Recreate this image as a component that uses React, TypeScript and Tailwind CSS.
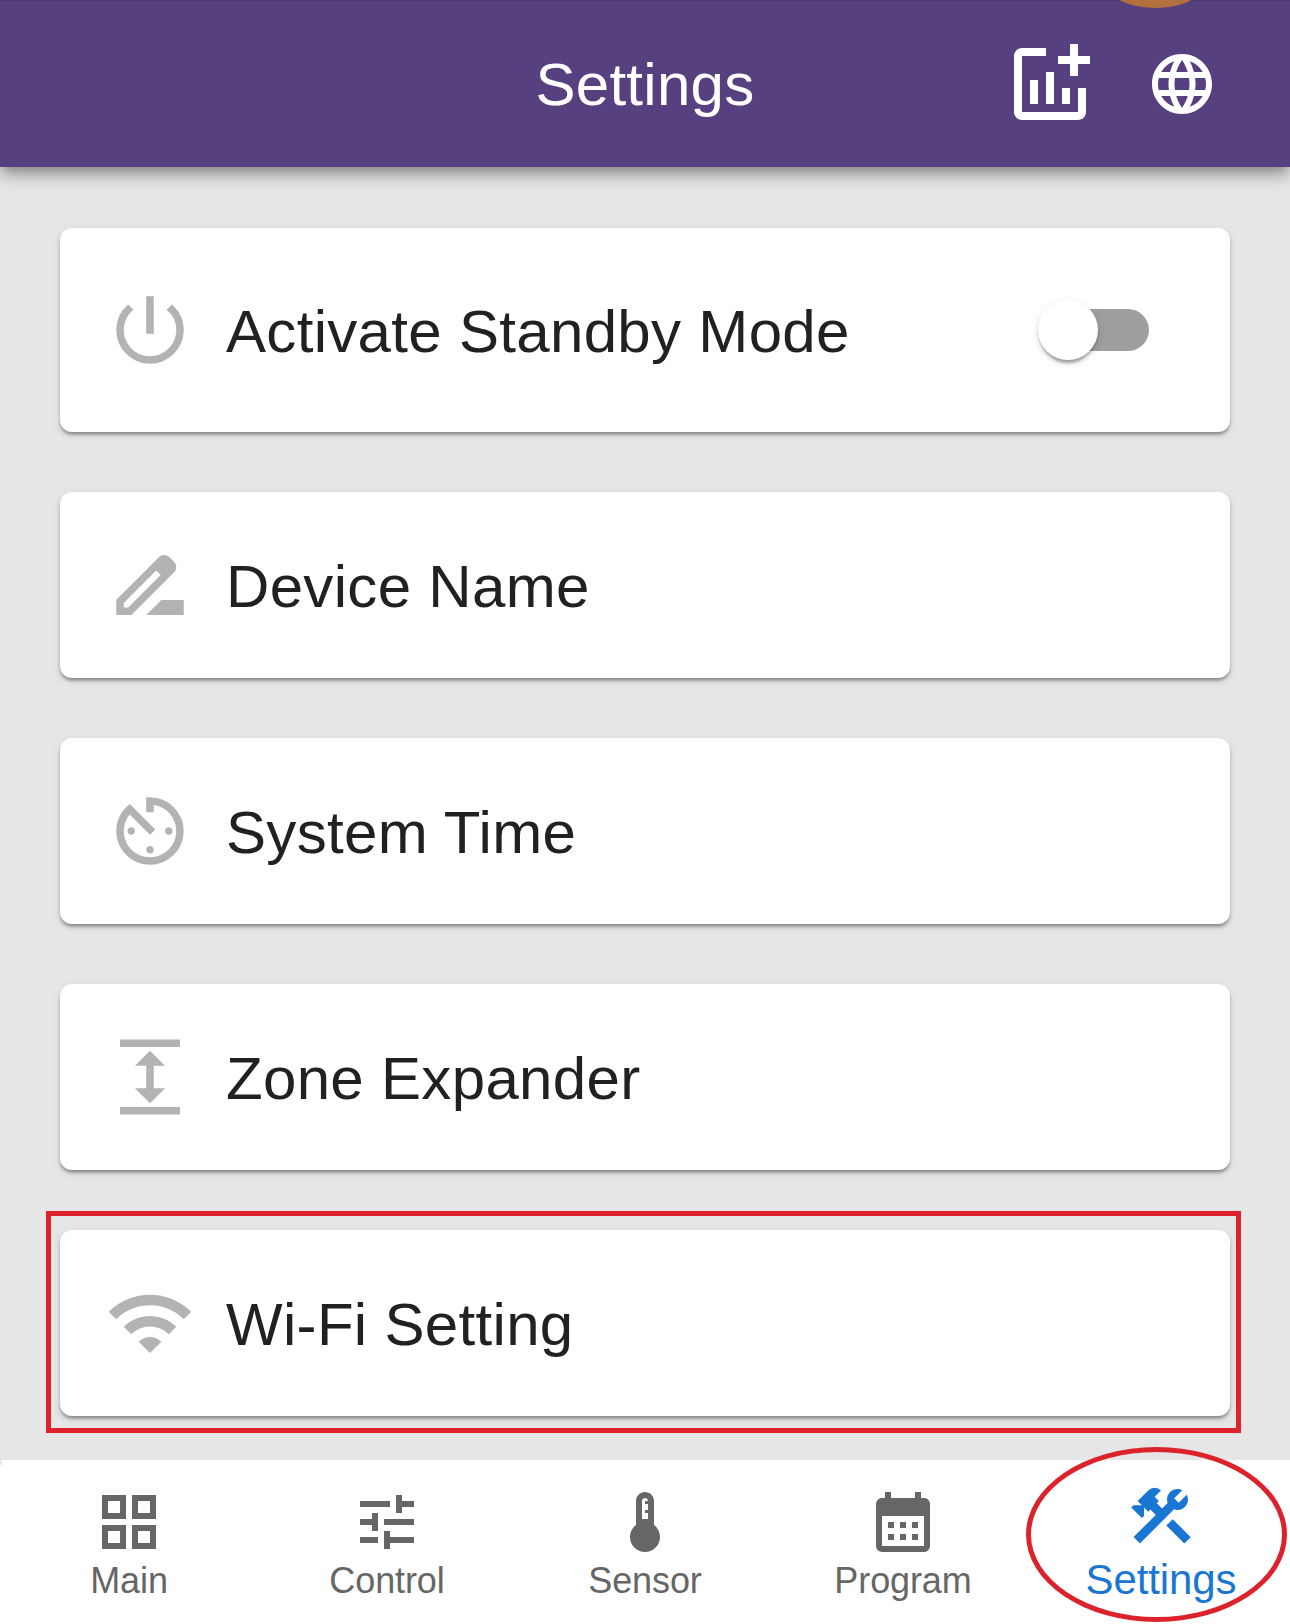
import type { ReactNode } from "react";
import type { IconType } from "react-icons";
import {
  MdAddchart,
  MdAvTimer,
  MdCalendarMonth,
  MdConstruction,
  MdDeviceThermostat,
  MdDriveFileRenameOutline,
  MdExpand,
  MdGridView,
  MdLanguage,
  MdPowerSettingsNew,
  MdTune,
  MdWifi,
} from "react-icons/md";

function Card({
  icon: Icon,
  label,
  tall = false,
  children,
}: {
  icon: IconType;
  label: string;
  tall?: boolean;
  children?: ReactNode;
}) {
  return (
    <div
      className={`relative flex shrink-0 items-center rounded-[12px] bg-white pl-[45px] pr-[81px] shadow-[0_6px_3px_-6px_rgba(0,0,0,0.2),0_3px_3px_0_rgba(0,0,0,0.28),0_3px_9px_0_rgba(0,0,0,0.1)] ${
        tall ? "h-[204px]" : "h-[186px]"
      }`}
    >
      <Icon className="size-[90px] shrink-0 text-[#b3b3b3]" />
      <span className="ml-[31px] flex-1 whitespace-nowrap pt-[3px] text-[60px] leading-[90px] tracking-[0.32px] text-[#212121]">
        {label}
      </span>
      {children}
    </div>
  );
}

function Switch() {
  return (
    <div className="relative flex h-[60px] w-[111px] items-center justify-end">
      <div className="h-[42px] w-[102px] rounded-full bg-[#9e9e9e]" />
      <div className="absolute left-0 top-0 size-[60px] rounded-full bg-white shadow-[0_6px_3px_-3px_rgba(0,0,0,0.2),0_3px_3px_0_rgba(0,0,0,0.14),0_3px_9px_0_rgba(0,0,0,0.12)]" />
    </div>
  );
}

function NavItem({ icon: Icon, label, active = false }: { icon: IconType; label: string; active?: boolean }) {
  return (
    <div
      className={`flex w-[258px] flex-col items-center ${
        active ? "pt-[20px] text-[#1976d2]" : "pt-[26px] text-[#666666]"
      }`}
    >
      <Icon className="size-[72px]" />
      <span
        className={`whitespace-nowrap ${
          active ? "text-[42px] leading-[56px] tracking-[-0.1px]" : "text-[36px] leading-[46px] tracking-[-0.1px]"
        }`}
      >
        {label}
      </span>
    </div>
  );
}

export default function App() {
  return (
    <div className="relative flex h-[1624px] w-[1290px] flex-col overflow-hidden bg-[#e6e6e6] font-['Liberation_Sans',Arial,sans-serif]">
      <header className="relative z-10 grid h-[167px] shrink-0 grid-cols-3 items-center border-t border-[#4b3672] bg-[#57407f] shadow-[0_6px_12px_-3px_rgba(0,0,0,0.3),0_12px_15px_0_rgba(0,0,0,0.1),0_3px_20px_0_rgba(0,0,0,0.16)]">
        <div />
        <h1 className="pt-[2px] text-center text-[60px] leading-[90px] tracking-[0.3px] text-white">Settings</h1>
        <div className="flex items-center justify-end gap-[48px] pr-[72px] text-white">
          <MdAddchart className="size-[96px]" />
          <MdLanguage className="size-[72px]" />
        </div>
        <div className="absolute left-[1112px] top-[-30px] h-[37px] w-[87px] rounded-[50%] bg-[#b1703d]" />
      </header>

      <main className="flex flex-1 flex-col gap-[60px] px-[60px] pt-[61px]">
        <Card icon={MdPowerSettingsNew} label="Activate Standby Mode" tall>
          <Switch />
        </Card>
        <Card icon={MdDriveFileRenameOutline} label="Device Name" />
        <Card icon={MdAvTimer} label="System Time" />
        <Card icon={MdExpand} label="Zone Expander" />
        <Card icon={MdWifi} label="Wi-Fi Setting">
          <div className="absolute left-[-14px] top-[-19px] h-[222px] w-[1195px] border-[5px] border-[#dc232c]" />
        </Card>
      </main>

      <nav className="relative flex h-[164px] shrink-0 rounded-tl-[3px] bg-white">
        <div className="absolute left-0 top-0 h-[5px] w-[2px] bg-[#e6e6e6]" />
        <NavItem icon={MdGridView} label="Main" />
        <NavItem icon={MdTune} label="Control" />
        <NavItem icon={MdDeviceThermostat} label="Sensor" />
        <NavItem icon={MdCalendarMonth} label="Program" />
        <NavItem icon={MdConstruction} label="Settings" active />
        <div className="absolute left-[1026px] top-[-13px] h-[175px] w-[261px] rounded-[50%] border-[5px] border-[#dc232c]" />
      </nav>
    </div>
  );
}
